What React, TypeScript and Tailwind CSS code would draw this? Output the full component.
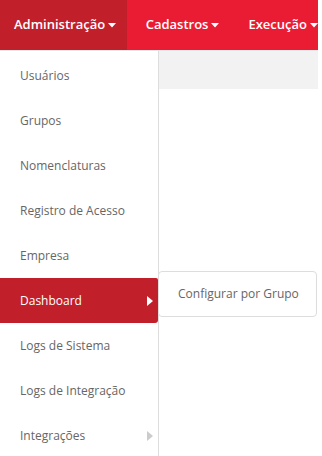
import React from "react";

const Caret = () => (
  <svg width="8" height="5" viewBox="0 0 8 5" className="ml-[3px] mt-[1px]">
    <path d="M0 0 L8 0 L4 4.5 Z" fill="white" />
  </svg>
);

const RightCaret = ({ color }: { color: string }) => (
  <svg width="6" height="10" viewBox="0 0 6 10">
    <path d="M0 0 L6 5 L0 10 Z" fill={color} />
  </svg>
);

const items = [
  "Usuários",
  "Grupos",
  "Nomenclaturas",
  "Registro de Acesso",
  "Empresa",
  "Dashboard",
  "Logs de Sistema",
  "Logs de Integração",
  "Integrações",
];

export default function App() {
  return (
    <div
      className="w-[322px] h-[456px] overflow-hidden bg-white relative"
      style={{ fontFamily: '"Open Sans", sans-serif' }}
    >
      <div className="w-[318px]">
        <nav className="h-[50px] flex bg-[#ea1c33] text-white font-semibold text-[13px]">
          <div className="w-[130px] bg-[#c1202b] flex items-center pl-[14px]">
            Administração
            <Caret />
          </div>
          <div className="flex items-center pl-[19px]">
            Cadastros
            <Caret />
          </div>
          <div className="flex items-center pl-[29px]">
            Execução
            <Caret />
          </div>
        </nav>
        <div className="h-px bg-[#e8e8e8]" />
        <div className="flex h-[405px]">
          <div className="w-[159px] border-r border-[#dddddd] bg-white relative pt-[2px]">
            {items.map((t) => {
              const active = t === "Dashboard";
              return (
                <div
                  key={t}
                  className={
                    "h-[45px] flex items-center justify-between pl-[20px] pr-[3px] text-[12px] " +
                    (active
                      ? "bg-[#c1202b] text-white rounded-br-[3px] rounded-tr-[2px] -mr-px relative z-10 w-[158px]"
                      : "text-[#666666]")
                  }
                >
                  <span>{t}</span>
                  {active ? (
                    <span className="mr-[2px]"><RightCaret color="#ffffff" /></span>
                  ) : t === "Integrações" ? (
                    <span className="mr-[2px]"><RightCaret color="#cccccc" /></span>
                  ) : null}
                </div>
              );
            })}
          </div>
          <div className="flex-1 flex flex-col">
            <div className="h-[38px] bg-[#f2f2f2]" />
            <div className="flex-1 bg-white" />
          </div>
        </div>
      </div>
      <div className="absolute left-[158px] top-[271px] w-[159px] h-[46px] bg-white border border-[#dddddd] rounded-[4px] flex items-center pl-[19px] text-[12px] text-[#666666] z-20">
        Configurar por Grupo
      </div>
    </div>
  );
}
